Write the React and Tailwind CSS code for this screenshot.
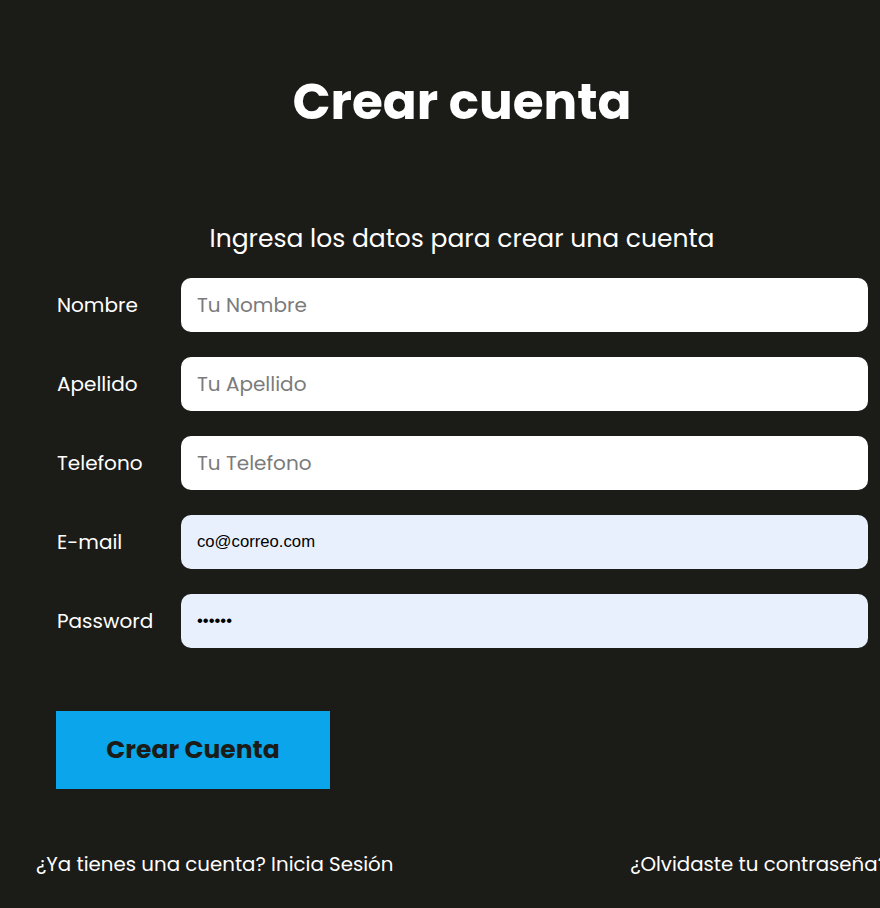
import React from "react";

export default function App() {
  const fields = [
    { label: "Nombre", placeholder: "Tu Nombre", type: "text", value: "" },
    { label: "Apellido", placeholder: "Tu Apellido", type: "text", value: "" },
    { label: "Telefono", placeholder: "Tu Telefono", type: "text", value: "" },
    { label: "E-mail", placeholder: "Tu E-mail", type: "email", value: "co@correo.com", filled: true },
    { label: "Password", placeholder: "Tu Password", type: "password", value: "123456", filled: true },
  ];

  return (
    <div
      className="w-full min-h-screen overflow-hidden bg-[#1b1b17] text-white"
      style={{ fontFamily: "Poppins, 'Open Sans', sans-serif" }}
    >
      <div className="w-[924px] pt-[70px]">
        <h1 className="text-center text-[50px] font-bold leading-[64px]">Crear cuenta</h1>
        <p className="mt-[89px] text-center text-[25px] leading-[32px]">
          Ingresa los datos para crear una cuenta
        </p>

        <form className="mt-[23px] pl-[57px] flex flex-col gap-[25px]">
          {fields.map((f) => (
            <div key={f.label} className="flex items-center">
              <label className="w-[124px] text-[20px] leading-[28px]">{f.label}</label>
              <input
                type={f.type}
                placeholder={f.placeholder}
                defaultValue={f.value}
                className={`w-[687px] h-[54px] rounded-[10px] px-4 text-[20px] outline-none placeholder:text-[#7b7b7b] ${
                  f.filled ? "bg-[#e8f0fe] text-black" : "bg-white text-black"
                }`}
                style={f.filled ? { fontFamily: "'Liberation Sans', Arial, sans-serif", fontSize: "16.7px" } : undefined}
              />
            </div>
          ))}
        </form>

        <button className="mt-[63px] ml-[56px] w-[274px] h-[78px] bg-[#0ba5ec] text-[#1b1b17] text-[25px] font-bold">
          Crear Cuenta
        </button>

        <div className="mt-[61px] flex justify-between pl-[36px] pr-[36px] text-[19.8px] leading-[28px]">
          <a href="#">¿Ya tienes una cuenta? Inicia Sesión</a>
          <a href="#">¿Olvidaste tu contraseña?</a>
        </div>
      </div>
    </div>
  );
}
